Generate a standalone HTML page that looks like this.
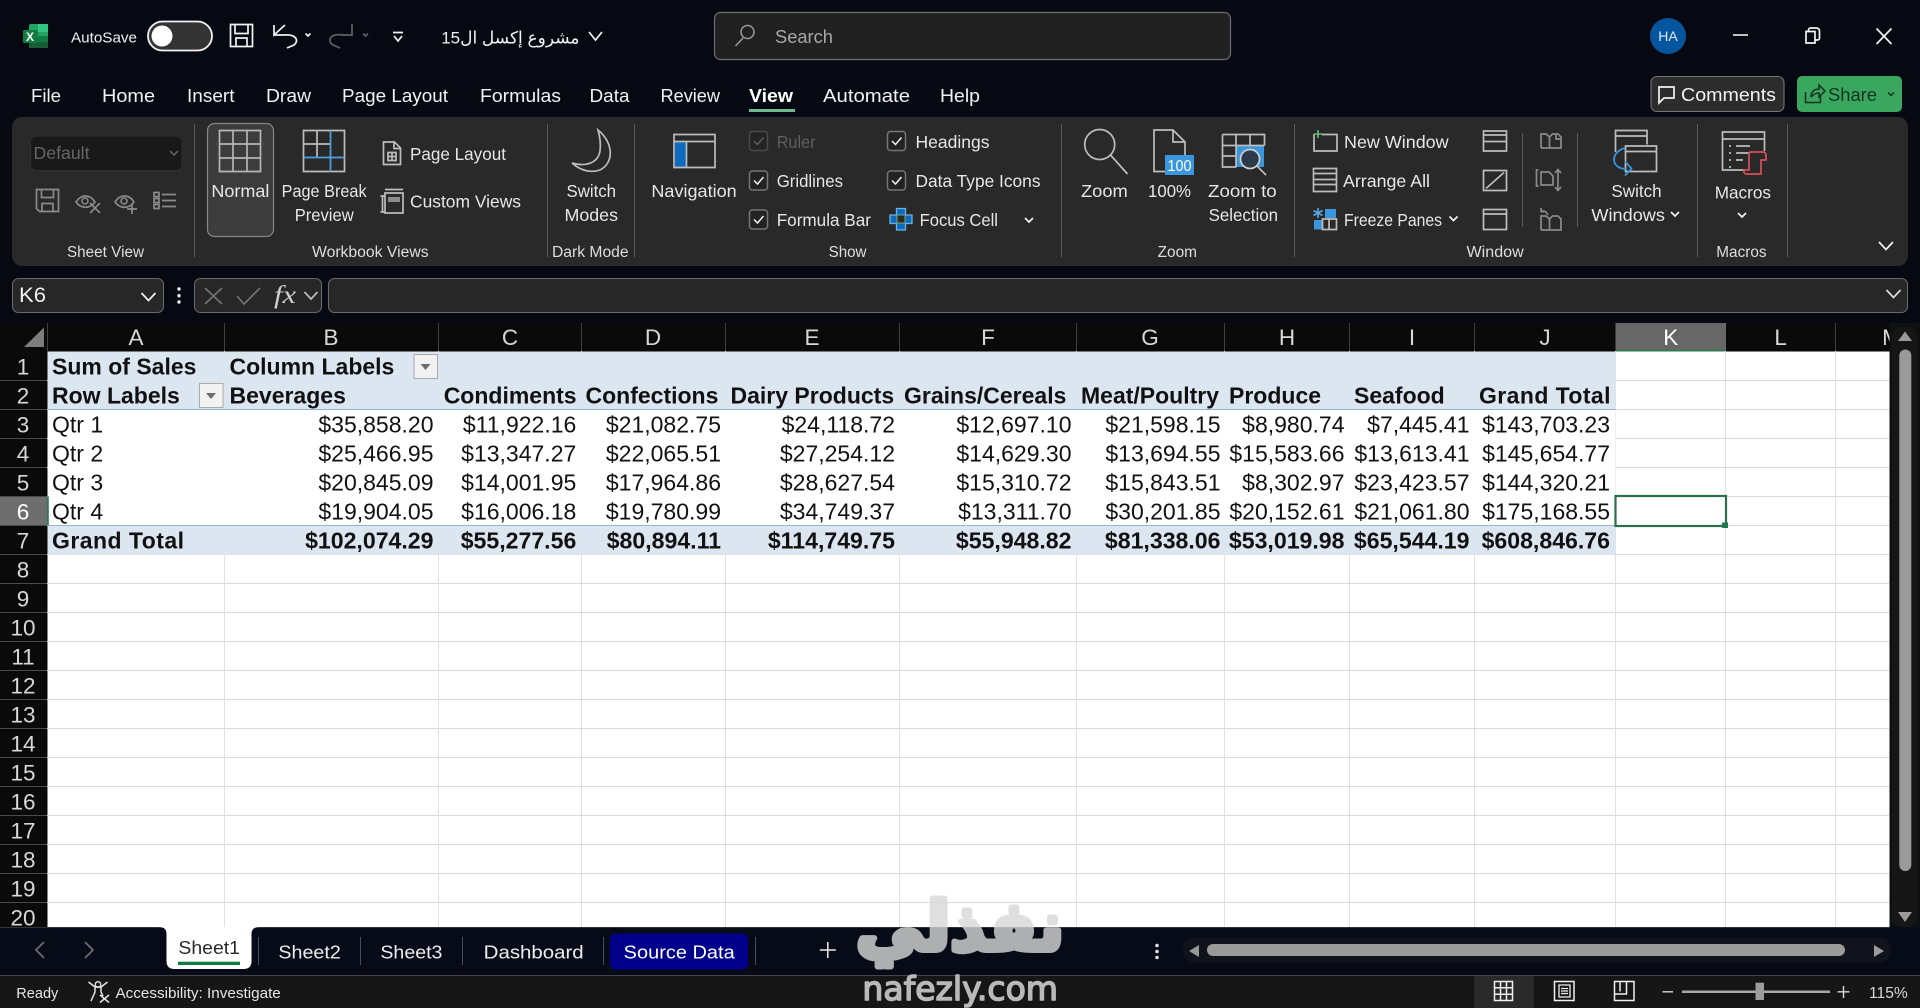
<!DOCTYPE html>
<html><head><meta charset="utf-8"><title>Excel</title>
<style>
html,body{margin:0;padding:0;width:1920px;height:1008px;overflow:hidden;background:#060912}
svg{display:block}
text{font-family:"Liberation Sans","DejaVu Sans",sans-serif;fill:#e6e6e6;font-size:17.5px}
.t{font-size:18.5px;fill:#f2f2f2}
.g{font-size:15.5px;fill:#dedede}
.c{font-size:23px;fill:#111}
.b{font-size:23px;fill:#111;font-weight:bold}
.n{font-size:23px;fill:#111;text-anchor:end}
.nb{font-size:23.1px;fill:#111;font-weight:bold;text-anchor:end}
.h{font-size:22.5px;fill:#d8d8d8;text-anchor:middle}
.s{font-size:18.5px;fill:#ededed}
.i{fill:none;stroke:#bdbdbd;stroke-width:1.7}
.w{fill:none;stroke:#f2f2f2;stroke-width:1.7}
.d{fill:none;stroke:#8a8a8a;stroke-width:1.7}
.sep{stroke:#5a5a5a;stroke-width:1}
</style></head><body>
<svg width="1920" height="1008" viewBox="0 0 1920 1008" xmlns="http://www.w3.org/2000/svg">
<rect width="1920" height="1008" fill="#060912"/>

<!-- Title bar -->
<rect x="29" y="24" width="19" height="24" rx="2" fill="#21a366"/>
<rect x="38" y="24" width="10" height="8" fill="#33c481"/>
<rect x="29" y="36" width="19" height="6" fill="#107c41"/>
<rect x="29" y="42" width="19" height="6" fill="#185c37"/>
<rect x="23" y="30" width="15" height="13" rx="1" fill="#107c41"/>
<text x="26" y="41" style="font-size:12px;font-weight:bold;fill:#fff">X</text>
<text x="71" y="42.5" textLength="66" lengthAdjust="spacingAndGlyphs" style="font-size:15px;fill:#f0f0f0">AutoSave</text>
<rect x="148" y="21.5" width="64" height="29" rx="14.5" fill="#333" stroke="#f2f2f2" stroke-width="1.8"/>
<circle cx="162" cy="36" r="10.5" fill="#fff"/>
<path class="w" d="M230.5 24.5h22v22h-22zM235 24.5v9h13v-9M236 46.5v-8.500h11v8.500"/>
<path class="w" d="M285 25l-11 10v-10M274 35h10c13-1 15 6 10 10l-7 3"/>
<path class="w" stroke-width="1.400" d="M305.500 33.500l2.500 2.500 2.500-2.500"/>
<path class="d" style="stroke:#5f6268" d="M352 24v11h-11M352 35h-8c-15-2-17 6-11 10l7 3"/>
<path class="d" style="stroke:#5f6268" d="M363 33.500l2.500 2.500 2.500-2.500"/>
<path class="w" d="M393 32.500h10M394 36l4 5 4-5"/>
<text x="579.500" y="43.500" direction="rtl" style="font-size:17px;fill:#f2f2f2">مشروع إكسل ال15</text>
<path class="w" d="M589 32l6.500 8 6.500-8"/>
<rect x="714.500" y="12.500" width="516" height="47" rx="6" fill="#212121" stroke="#6e6e6e" stroke-width="1.200"/>
<circle cx="747.500" cy="32" r="6.500" fill="none" stroke="#9a9a9a" stroke-width="1.500"/>
<path d="M743 38l-7.500 8" stroke="#9a9a9a" stroke-width="1.500"/>
<text x="775" y="43" textLength="58" lengthAdjust="spacingAndGlyphs" style="font-size:18px;fill:#a8a8a8">Search</text>
<circle cx="1668" cy="36" r="18" fill="#06569f"/>
<text x="1668" y="41" text-anchor="middle" style="font-size:14px;fill:#dbe8f5">HA</text>
<path d="M1733 35h15" stroke="#f2f2f2" stroke-width="1.600"/>
<path class="w" d="M1806 31.500h9v11.500h-9zM1808.500 31.500v-1.500a2 2 0 0 1 2-2h6a3 3 0 0 1 3 3v7a2 2 0 0 1-2 2h-2"/>
<path class="w" d="M1876.500 28.500l15 15.500M1891.500 28.500l-15 15.500"/>

<!-- Tabs -->
<text class="t" x="31" y="102" textLength="30" lengthAdjust="spacingAndGlyphs">File</text>
<text class="t" x="102" y="102" textLength="53" lengthAdjust="spacingAndGlyphs">Home</text>
<text class="t" x="187" y="102" textLength="47.500" lengthAdjust="spacingAndGlyphs">Insert</text>
<text class="t" x="266" y="102" textLength="45" lengthAdjust="spacingAndGlyphs">Draw</text>
<text class="t" x="342" y="102" textLength="106" lengthAdjust="spacingAndGlyphs">Page Layout</text>
<text class="t" x="480" y="102" textLength="81" lengthAdjust="spacingAndGlyphs">Formulas</text>
<text class="t" x="589.500" y="102" textLength="40" lengthAdjust="spacingAndGlyphs">Data</text>
<text class="t" x="660.500" y="102" textLength="59.500" lengthAdjust="spacingAndGlyphs">Review</text>
<text class="t" x="749" y="102" textLength="44" lengthAdjust="spacingAndGlyphs" style="font-weight:bold;fill:#fff">View</text>
<text class="t" x="823" y="102" textLength="87" lengthAdjust="spacingAndGlyphs">Automate</text>
<text class="t" x="940" y="102" textLength="40" lengthAdjust="spacingAndGlyphs">Help</text>
<rect x="749" y="109" width="46" height="3" fill="#6fb98f"/>
<rect x="1651" y="76.500" width="133" height="35" rx="6" fill="#2c2c2c" stroke="#757575" stroke-width="1.100"/>
<path class="w" d="M1659 87h15v11h-10l-5 5z"/>
<text x="1681" y="101" textLength="95" lengthAdjust="spacingAndGlyphs" style="font-size:18.500px;fill:#f2f2f2">Comments</text>
<rect x="1797" y="76" width="105" height="36" rx="5" fill="#3aa75f"/>
<path d="M1805.500 92v10.500h15v-7M1811 97c0-5 3-8 8-8v-4l6 6-6 6v-4c-4 0-6 2-8 4" fill="none" stroke="#14331f" stroke-width="1.500"/>
<text x="1828" y="101" textLength="49" lengthAdjust="spacingAndGlyphs" style="font-size:18.500px;fill:#14331f">Share</text>
<path d="M1888 92.500l3 3 3-3" fill="none" stroke="#14331f" stroke-width="1.500"/>

<!-- Ribbon -->
<rect x="12" y="117" width="1896" height="149" rx="10" fill="#292929"/>
<g class="sep">
<path d="M194.500 124v133M547.500 124v133M634.500 124v133M1061.500 124v133M1294.500 124v133M1697.500 124v133M1787.500 124v133M1522.500 133v94M1577.500 133v94"/>
</g>
<!-- Sheet view -->
<rect x="30.500" y="136" width="151.500" height="34.500" rx="6" fill="#191919" stroke="#303030"/>
<text x="33.500" y="159" textLength="56" lengthAdjust="spacingAndGlyphs" style="fill:#666;font-size:17.500px">Default</text>
<path d="M170 151l4 4 4-4" fill="none" stroke="#666" stroke-width="1.500"/>
<path class="d" d="M36.500 189.500h22v22h-19l-3-3zM41.500 189.500v8h12v-8M42 211v-7.500h11v7.500"/>
<path class="d" d="M76 202c5-8 14-8 19 0-5 7-14 7-19 0z"/><circle cx="85" cy="201" r="3" fill="none" stroke="#8a8a8a" stroke-width="1.500"/><path class="d" d="M90 203l10 10M100 203l-10 10"/>
<path class="d" d="M115 202c5-8 14-8 19 0-5 7-14 7-19 0z"/><circle cx="124" cy="201" r="3" fill="none" stroke="#8a8a8a" stroke-width="1.500"/><path class="d" d="M132 204v10M127 209h10"/>
<path class="d" d="M154 192.500h5v4h-5zM154 198.500h5v4h-5zM154 204.500h5v4h-5zM162 194.500h14M162 200.500h14M162 206.500h14"/>
<text class="g" x="67" y="257" textLength="77" lengthAdjust="spacingAndGlyphs">Sheet View</text>
<!-- Workbook views -->
<rect x="207.500" y="123.500" width="66" height="113" rx="7" fill="#3c3c3c" stroke="#858585" stroke-width="1.200"/>
<path class="i" style="stroke:#b5b5b5" d="M219.500 130.500h41v41h-41zM233 130.500v41M247 130.500v41M219.500 144h41M219.500 158h41"/>
<text x="211.400" y="197" textLength="58" lengthAdjust="spacingAndGlyphs">Normal</text>
<path class="i" d="M303.500 130.500h41v41h-41zM317 130.500v27M303.500 144h27"/>
<path d="M330.500 130.500v41M303.500 157.500h41" stroke="#4aa0dc" stroke-width="1.800"/>
<text x="281.600" y="197" textLength="85" lengthAdjust="spacingAndGlyphs">Page Break</text>
<text x="294.700" y="221" textLength="59" lengthAdjust="spacingAndGlyphs">Preview</text>
<path class="i" d="M383.500 142h11l6 6v16.500h-17zM394 142v6.500h6.500M388 152.500h8v8h-8zM392 152.500v8M388 156.500h8"/>
<text x="410" y="159.800" textLength="96" lengthAdjust="spacingAndGlyphs">Page Layout</text>
<path class="i" d="M385 193h18v20h-18zM385 189.500h18M380.500 196h4M380.500 212h4M382.500 196v16"/><rect x="388" y="197" width="12" height="5" fill="#8a8a8a"/>
<text x="410" y="207.300" textLength="111" lengthAdjust="spacingAndGlyphs">Custom Views</text>
<text class="g" x="312" y="257" textLength="116.600" lengthAdjust="spacingAndGlyphs">Workbook Views</text>
<!-- Dark mode -->
<path class="i" d="M598 130c16 13 16 33 2 40-9 3-19 1-28-7 14 4 26 0 28-12 1-7 0-14-2-21z"/>
<text x="566.500" y="197" textLength="49.500" lengthAdjust="spacingAndGlyphs">Switch</text>
<text x="564.500" y="221" textLength="53.500" lengthAdjust="spacingAndGlyphs">Modes</text>
<text class="g" x="552" y="257" textLength="76.600" lengthAdjust="spacingAndGlyphs">Dark Mode</text>
<!-- Navigation -->
<rect x="675" y="142" width="11" height="25" fill="#0f6cbd"/>
<path class="i" d="M674 134.500h41v33h-41zM674 141.500h41M686.500 141.500v26"/>
<text x="651.400" y="197" textLength="85.300" lengthAdjust="spacingAndGlyphs">Navigation</text>
<!-- Show checkboxes -->
<rect x="749.500" y="131.500" width="18" height="19" rx="3" fill="#232323" stroke="#4a4a4a" stroke-width="1.500"/>
<path d="M754 141l3.500 3.500 6-7" fill="none" stroke="#5e5e5e" stroke-width="1.500"/>
<text x="776.700" y="148" textLength="38.800" lengthAdjust="spacingAndGlyphs" style="fill:#5f5f5f">Ruler</text>
<rect x="749.500" y="171" width="18" height="19" rx="3" fill="#232323" stroke="#757575" stroke-width="1.500"/>
<path d="M754 180.500l3.500 3.500 6-7" fill="none" stroke="#f0f0f0" stroke-width="1.500"/>
<text x="776.700" y="187" textLength="66.300" lengthAdjust="spacingAndGlyphs">Gridlines</text>
<rect x="749.500" y="210" width="18" height="19" rx="3" fill="#232323" stroke="#757575" stroke-width="1.500"/>
<path d="M754 219.500l3.500 3.500 6-7" fill="none" stroke="#f0f0f0" stroke-width="1.500"/>
<text x="776.700" y="226" textLength="94.300" lengthAdjust="spacingAndGlyphs">Formula Bar</text>
<rect x="887.500" y="131.500" width="18" height="19" rx="3" fill="#232323" stroke="#757575" stroke-width="1.500"/>
<path d="M892 141l3.500 3.500 6-7" fill="none" stroke="#f0f0f0" stroke-width="1.500"/>
<text x="915.500" y="148" textLength="74" lengthAdjust="spacingAndGlyphs">Headings</text>
<rect x="887.500" y="171" width="18" height="19" rx="3" fill="#232323" stroke="#757575" stroke-width="1.500"/>
<path d="M892 180.500l3.500 3.500 6-7" fill="none" stroke="#f0f0f0" stroke-width="1.500"/>
<text x="915.500" y="187" textLength="125" lengthAdjust="spacingAndGlyphs">Data Type Icons</text>
<path d="M896.500 208.500h9v6.500h6.500v8.500h-6.500v6.500h-9v-6.500h-6.500v-8.500h6.500z" fill="#0f6cbd" stroke="#6ab2e6" stroke-width="1.300"/>
<rect x="897" y="215" width="8" height="8" fill="#262c28" stroke="#7f9f7f"/>
<text x="919.600" y="226" textLength="78.400" lengthAdjust="spacingAndGlyphs">Focus Cell</text>
<path class="w" d="M1025 218l4 4 4-4"/>
<text class="g" x="828.600" y="257" textLength="37.900" lengthAdjust="spacingAndGlyphs">Show</text>
<!-- Zoom -->
<circle cx="1099.700" cy="144.500" r="15" class="i"/>
<path class="i" d="M1110.500 155l17 19"/>
<text x="1081" y="197" textLength="46.800" lengthAdjust="spacingAndGlyphs">Zoom</text>
<path class="i" d="M1185 155v-13l-12-12h-19v41.500h11M1173 130v12h12"/>
<rect x="1165" y="155" width="29" height="20" fill="#3a96dd"/>
<text x="1167.500" y="171" textLength="24" lengthAdjust="spacingAndGlyphs" style="font-size:16px;fill:#fff">100</text>
<text x="1148" y="197" textLength="43" lengthAdjust="spacingAndGlyphs">100%</text>
<rect x="1236" y="145" width="28" height="22" fill="#3a96dd"/>
<path class="i" d="M1222.500 134.500h42v11M1222.500 134.500v32.500h14M1222.500 145.500h42M1222.500 156h14M1236 134.500v32.500M1250 134.500v11"/>
<circle cx="1250" cy="159" r="9.500" fill="#2b3b47" stroke="#d0d0d0" stroke-width="1.700"/>
<path class="i" d="M1257 166l9 9"/>
<text x="1208" y="197" textLength="68.700" lengthAdjust="spacingAndGlyphs">Zoom to</text>
<text x="1208.600" y="221" textLength="69.400" lengthAdjust="spacingAndGlyphs">Selection</text>
<text class="g" x="1157.600" y="257" textLength="39.400" lengthAdjust="spacingAndGlyphs">Zoom</text>
<!-- Window -->
<path class="i" d="M1322 134.500h15v16.500h-23v-17"/><path d="M1318 130v8M1314 134h8" stroke="#5bbd72" stroke-width="1.600"/>
<text x="1344" y="148" textLength="104.600" lengthAdjust="spacingAndGlyphs">New Window</text>
<path class="i" d="M1313.500 168.500h23v23h-23zM1313.500 173.500h23M1313.500 179.500h23M1313.500 184.500h23"/>
<text x="1343" y="187" textLength="87" lengthAdjust="spacingAndGlyphs">Arrange All</text>
<rect x="1314" y="220" width="8" height="9.500" fill="#3a96dd"/><rect x="1325" y="209" width="11" height="9" fill="#3a96dd"/>
<path class="i" d="M1322.500 219h14v10.500h-14zM1329 219v10.500"/>
<path d="M1318 208v10M1313.500 210.500l9 5M1322.500 210.500l-9 5" stroke="#5aa9e6" stroke-width="1.600"/>
<text x="1344" y="226" textLength="98" lengthAdjust="spacingAndGlyphs">Freeze Panes</text>
<path class="w" d="M1449.500 216.500l4 4 4-4"/>
<path class="i" d="M1483.500 131h23v20h-23zM1483.500 135h23M1483.500 141.500h23"/>
<path class="i" d="M1483.500 170.500h23v20h-23zM1486 188.500l18-16"/>
<path class="i" d="M1483.500 209.500h23v20h-23zM1483.500 214h23"/>
<path class="d" d="M1541 148v-14h5l3.500 3 3-3h5.500l3 3v11h-20M1549.500 137v11M1556 134v5h5"/>
<path class="d" d="M1538.500 170h-2v16h2M1541 172h8l4 4v9h-12zM1558 170v20M1555 173l3-3.500 3 3.500M1555 187l3 3.500 3-3.500"/>
<path class="d" d="M1541 230v-14h5l3.500 3 3-3h5.500l3 3v11h-20M1549.500 219v11M1548 215c-2-4-5-5-7-3M1541 212l0-4M1541 212l3.500-1"/>
<text class="g" x="1466.500" y="257" textLength="57.200" lengthAdjust="spacingAndGlyphs">Window</text>
<!-- Switch windows -->
<path class="i" d="M1615.500 152v-21.500h31.500v14M1615.500 136h31.500M1625.500 146h31v25.500h-31zM1625.500 151.500h31"/>
<path d="M1625 148c-15 4-15 21 2 21M1625 161.500l6.500 7-6.500 7" fill="none" stroke="#3a96dd" stroke-width="1.800"/>
<text x="1611.400" y="197" textLength="50.200" lengthAdjust="spacingAndGlyphs">Switch</text>
<text x="1591.400" y="221" textLength="73.600" lengthAdjust="spacingAndGlyphs">Windows</text>
<path class="w" d="M1671 212l4 4 4-4"/>
<!-- Macros -->
<path class="i" d="M1745 170h-22.500v-38h42v19M1722.500 139h42M1729 146h2M1736 146h14M1729 153h2M1736 153h18M1729 160h2M1736 160h7M1729 167h2"/>
<path d="M1750 152h13a3 3 0 0 1 3 3v5h-5v14h-15a3 3 0 0 1-2-4h5v-15a3 3 0 0 1 1-3z" fill="#292929" stroke="#d9505a" stroke-width="1.700"/>
<text x="1714.700" y="198.700" textLength="56.300" lengthAdjust="spacingAndGlyphs">Macros</text>
<path class="w" d="M1738 213l4 4 4-4"/>
<text class="g" x="1716.300" y="257" textLength="50.200" lengthAdjust="spacingAndGlyphs">Macros</text>
<path class="w" d="M1879 242l7 7.500 7-7.500"/>

<!-- Formula bar -->
<rect x="12.500" y="278.500" width="151" height="34" rx="6" fill="#272727" stroke="#686868" stroke-width="1.100"/>
<text x="19" y="302" textLength="27" lengthAdjust="spacingAndGlyphs" style="font-size:21px;fill:#f0f0f0">K6</text>
<path class="w" d="M141.500 293l7 7.500 7-7.500"/>
<circle cx="179" cy="289" r="1.700" fill="#eee"/><circle cx="179" cy="295.700" r="1.700" fill="#eee"/><circle cx="179" cy="302" r="1.700" fill="#eee"/>
<rect x="194.500" y="278.500" width="127" height="34" rx="6" fill="#272727" stroke="#686868" stroke-width="1.100"/>
<path d="M205 288l17 16M222 288l-17 16" stroke="#737373" stroke-width="1.700"/>
<path d="M237 296l7 8 16-16" fill="none" stroke="#737373" stroke-width="1.700"/>
<text x="274" y="303" textLength="22" lengthAdjust="spacingAndGlyphs" style="font-family:'Liberation Serif',serif;font-style:italic;font-size:25px;fill:#cfcfcf">fx</text>
<path class="i" d="M304.500 292l6.500 7 6.500-7"/>
<rect x="328.500" y="278.500" width="1579" height="34" rx="6" fill="#272727" stroke="#686868" stroke-width="1.100"/>
<path class="i" style="stroke:#ddd" d="M1886.500 290l7 7.500 7-7.500"/>

<!-- Column / row headers -->
<rect x="0" y="323" width="1889.500" height="28.500" fill="#0a0a0a"/>
<rect x="0" y="351" width="47.500" height="576" fill="#0a0a0a"/>
<rect x="1889.500" y="323" width="30.500" height="604" fill="#0f1012"/>
<path d="M44 327.500v19.500h-20z" fill="#7d7d7d"/>
<rect x="1615.500" y="323" width="110.500" height="28" fill="#676767"/>
<rect x="1615.500" y="349.800" width="110.500" height="2" fill="#2f7a54"/>
<rect x="0" y="496.300" width="47.500" height="29" fill="#6e6e6e"/>
<path d="M47.500 323v28M224.500 323v28M438.500 323v28M581.500 323v28M725.500 323v28M899.500 323v28M1076.500 323v28M1224.500 323v28M1349.500 323v28M1474.500 323v28M1835.500 323v28" stroke="#404040"/>
<text class="h" x="136" y="345">A</text><text class="h" x="331" y="345">B</text><text class="h" x="510" y="345">C</text><text class="h" x="653" y="345">D</text><text class="h" x="812" y="345">E</text><text class="h" x="988" y="345">F</text><text class="h" x="1150" y="345">G</text><text class="h" x="1287" y="345">H</text><text class="h" x="1412" y="345">I</text><text class="h" x="1545" y="345">J</text><text class="h" x="1670.700" y="345" style="fill:#fff">K</text><text class="h" x="1780.600" y="345">L</text>
<svg x="1836" y="323" width="53.500" height="28"><text class="h" x="55.500" y="22">M</text></svg>
<path d="M0 380.500h47M0 409.500h47M0 438.500h47M0 467.500h47M0 496.500h47M0 525.500h47M0 554.500h47M0 583.500h47M0 612.500h47M0 641.500h47M0 670.500h47M0 699.500h47M0 728.500h47M0 757.500h47M0 786.500h47M0 815.500h47M0 844.500h47M0 873.500h47M0 902.500h47" stroke="#4a4a4a"/>
<g transform="translate(0,-.8)">
<text class="h" x="23" y="375.300">1</text><text class="h" x="23" y="404.300">2</text><text class="h" x="23" y="433.300">3</text><text class="h" x="23" y="462.300">4</text><text class="h" x="23" y="491.300">5</text><text class="h" x="23" y="520.300" style="fill:#fff">6</text><text class="h" x="23" y="549.300">7</text><text class="h" x="23" y="578.300">8</text><text class="h" x="23" y="607.300">9</text><text class="h" x="23" y="636.300">10</text><text class="h" x="23" y="665.300">11</text><text class="h" x="23" y="694.300">12</text><text class="h" x="23" y="723.300">13</text><text class="h" x="23" y="752.300">14</text><text class="h" x="23" y="781.300">15</text><text class="h" x="23" y="810.300">16</text><text class="h" x="23" y="839.300">17</text><text class="h" x="23" y="868.300">18</text><text class="h" x="23" y="897.300">19</text><text class="h" x="23" y="926.300">20</text>
</g>

<!-- Grid -->
<rect x="47.500" y="351.500" width="1842" height="575.500" fill="#fff"/>
<path d="M224.500 351v576M438.500 351v576M581.500 351v576M725.500 351v576M899.500 351v576M1076.500 351v576M1224.500 351v576M1349.500 351v576M1474.500 351v576M1615.500 351v576M1725.500 351v576M1835.500 351v576" stroke="#e0e0e0"/>
<path d="M47 380.500h1842M47 409.500h1842M47 438.500h1842M47 467.500h1842M47 496.500h1842M47 525.500h1842M47 554.500h1842M47 583.500h1842M47 612.500h1842M47 641.500h1842M47 670.500h1842M47 699.500h1842M47 728.500h1842M47 757.500h1842M47 786.500h1842M47 815.500h1842M47 844.500h1842M47 873.500h1842M47 902.500h1842" stroke="#dcdcdc"/>
<rect x="47.500" y="351.500" width="1568" height="58" fill="#dce6f1"/>
<rect x="47.500" y="409.500" width="1568" height="116" fill="#fff"/>
<rect x="47.500" y="525.500" width="1568" height="29" fill="#dce6f1"/>
<path d="M47.500 409.500h1568M47.500 525.500h1568" stroke="#95b3d7"/>
<rect x="47" y="496.300" width="1.800" height="29" fill="#2f7a54"/>

<rect x="414" y="354.500" width="23.500" height="24" fill="#f2f2f2" stroke="#ababab"/><path d="M420.500 364h10l-5 6z" fill="#6e6e6e"/>
<rect x="199.500" y="383.500" width="23.500" height="24" fill="#f2f2f2" stroke="#ababab"/><path d="M206 393h10l-5 6z" fill="#6e6e6e"/>

<g transform="translate(0,-.8)">
<text class="b" x="52" y="375.300">Sum of Sales</text>
<text class="b" x="229.500" y="375.300">Column Labels</text>
<text class="b" x="52" y="404.300">Row Labels</text>
<text class="b" x="229.500" y="404.300">Beverages</text>
<text class="b" x="443.700" y="404.300">Condiments</text>
<text class="b" x="585.500" y="404.300">Confections</text>
<text class="b" x="730.500" y="404.300">Dairy Products</text>
<text class="b" x="904" y="404.300">Grains/Cereals</text>
<text class="b" x="1081" y="404.300">Meat/Poultry</text>
<text class="b" x="1229" y="404.300">Produce</text>
<text class="b" x="1354" y="404.300">Seafood</text>
<text class="b" x="1479" y="404.300" textLength="131.500" lengthAdjust="spacing">Grand Total</text>

<text class="c" x="52" y="433.300">Qtr 1</text><text class="n" x="433.500" y="433.300">$35,858.20</text><text class="n" x="576.300" y="433.300">$11,922.16</text><text class="n" x="721" y="433.300">$21,082.75</text><text class="n" x="895" y="433.300">$24,118.72</text><text class="n" x="1071.500" y="433.300">$12,697.10</text><text class="n" x="1220.500" y="433.300">$21,598.15</text><text class="n" x="1344.500" y="433.300">$8,980.74</text><text class="n" x="1469.500" y="433.300">$7,445.41</text><text class="n" x="1610" y="433.300">$143,703.23</text>
<text class="c" x="52" y="462.300">Qtr 2</text><text class="n" x="433.500" y="462.300">$25,466.95</text><text class="n" x="576.300" y="462.300">$13,347.27</text><text class="n" x="721" y="462.300">$22,065.51</text><text class="n" x="895" y="462.300">$27,254.12</text><text class="n" x="1071.500" y="462.300">$14,629.30</text><text class="n" x="1220.500" y="462.300">$13,694.55</text><text class="n" x="1344.500" y="462.300">$15,583.66</text><text class="n" x="1469.500" y="462.300">$13,613.41</text><text class="n" x="1610" y="462.300">$145,654.77</text>
<text class="c" x="52" y="491.300">Qtr 3</text><text class="n" x="433.500" y="491.300">$20,845.09</text><text class="n" x="576.300" y="491.300">$14,001.95</text><text class="n" x="721" y="491.300">$17,964.86</text><text class="n" x="895" y="491.300">$28,627.54</text><text class="n" x="1071.500" y="491.300">$15,310.72</text><text class="n" x="1220.500" y="491.300">$15,843.51</text><text class="n" x="1344.500" y="491.300">$8,302.97</text><text class="n" x="1469.500" y="491.300">$23,423.57</text><text class="n" x="1610" y="491.300">$144,320.21</text>
<text class="c" x="52" y="520.300">Qtr 4</text><text class="n" x="433.500" y="520.300">$19,904.05</text><text class="n" x="576.300" y="520.300">$16,006.18</text><text class="n" x="721" y="520.300">$19,780.99</text><text class="n" x="895" y="520.300">$34,749.37</text><text class="n" x="1071.500" y="520.300">$13,311.70</text><text class="n" x="1220.500" y="520.300">$30,201.85</text><text class="n" x="1344.500" y="520.300">$20,152.61</text><text class="n" x="1469.500" y="520.300">$21,061.80</text><text class="n" x="1610" y="520.300">$175,168.55</text>
<text class="b" x="52" y="549.300" textLength="132" lengthAdjust="spacing">Grand Total</text><text class="nb" x="433.500" y="549.300">$102,074.29</text><text class="nb" x="576.300" y="549.300">$55,277.56</text><text class="nb" x="721" y="549.300">$80,894.11</text><text class="nb" x="895" y="549.300">$114,749.75</text><text class="nb" x="1071.500" y="549.300">$55,948.82</text><text class="nb" x="1220.500" y="549.300">$81,338.06</text><text class="nb" x="1344.500" y="549.300">$53,019.98</text><text class="nb" x="1469.500" y="549.300">$65,544.19</text><text class="nb" x="1610" y="549.300">$608,846.76</text>
</g>

<rect x="1615.500" y="496" width="110.500" height="30" fill="none" stroke="#2b6e4b" stroke-width="2.200"/>
<rect x="1722" y="522.500" width="6" height="5.500" fill="#1f7a4a"/>

<!-- Vertical scroll -->
<rect x="1892" y="327" width="25" height="600" rx="10" fill="#161616"/>
<path d="M1905 331.500l7 9.500h-14z" fill="#9a9a9a"/>
<rect x="1899.300" y="349.500" width="12" height="521.500" rx="6" fill="#9a9a9a"/>
<path d="M1898 912h14l-7 10z" fill="#9a9a9a"/>

<!-- Sheet tabs -->
<rect x="0" y="927" width="1920" height="48" fill="#070b18"/>
<path d="M0 927.500H1889.500" stroke="#2e323a"/>
<path d="M159 927q7.500 0 7.500 7v27q0 8 8 8h69q8 0 8-8v-27q0-7 7.500-7z" fill="#fff"/>
<text x="178.400" y="954" textLength="61.600" lengthAdjust="spacingAndGlyphs" style="font-size:18.500px;fill:#2a2a2a">Sheet1</text>
<rect x="178" y="961.700" width="62" height="3.300" fill="#107c41"/>
<path class="i" style="stroke:#6f6f6f" d="M44 942l-8 8 8 8M85 942l8 8-8 8"/>
<path d="M258.500 937v28M360.500 937v28M462.500 937v28M603.500 937v28M755.500 937v28" stroke="#4a4e58"/>
<text class="s" x="278.400" y="958.500" textLength="62.400" lengthAdjust="spacingAndGlyphs">Sheet2</text>
<text class="s" x="380.400" y="958.500" textLength="62" lengthAdjust="spacingAndGlyphs">Sheet3</text>
<text class="s" x="483.700" y="958.500" textLength="100" lengthAdjust="spacingAndGlyphs">Dashboard</text>
<rect x="610" y="933.500" width="138" height="36" rx="6" fill="#00008b"/>
<text class="s" x="623.700" y="958.500" textLength="111" lengthAdjust="spacingAndGlyphs" style="fill:#fff">Source Data</text>
<path d="M827.800 942v16M819.800 950h16" stroke="#ededed" stroke-width="1.500"/>
<circle cx="1157" cy="945.500" r="1.800" fill="#ddd"/><circle cx="1157" cy="951.500" r="1.800" fill="#ddd"/><circle cx="1157" cy="957.500" r="1.800" fill="#ddd"/>
<rect x="1183" y="937" width="708" height="26" rx="12" fill="#10131b"/>
<path d="M1199 945v12l-10-6z" fill="#9a9a9a"/>
<rect x="1207" y="944" width="638" height="12" rx="6" fill="#9a9a9a"/>
<path d="M1874 945l10 6-10 6z" fill="#9a9a9a"/>

<!-- Status bar -->
<rect x="0" y="975" width="1920" height="33" fill="#161616"/>
<path d="M0 975.500h1920" stroke="#44464c"/>
<text x="16.300" y="998" textLength="42" lengthAdjust="spacingAndGlyphs" style="font-size:15px;fill:#e6e6e6">Ready</text>
<circle cx="98" cy="984.500" r="2.800" fill="none" stroke="#e6e6e6" stroke-width="1.300"/>
<path d="M88.500 982l6.500 5h6l6.500-5M95 987v5l-4 9M101 987v5l2 4M100 995l9 7.500M109 995l-9 7.500" fill="none" stroke="#e6e6e6" stroke-width="1.500"/>
<text x="115.500" y="998" textLength="165.300" lengthAdjust="spacingAndGlyphs" style="font-size:15px;fill:#e6e6e6">Accessibility: Investigate</text>
<rect x="1474" y="976" width="60" height="32" fill="#2a2a2a"/>
<path d="M1494.500 981.500h18v19h-18zM1500.500 981.500v19M1506.500 981.500v19M1494.500 987.800h18M1494.500 994.200h18" fill="none" stroke="#f0f0f0" stroke-width="1.500"/>
<path d="M1554.500 981.500h19.500v19h-19.500z" fill="none" stroke="#f0f0f0" stroke-width="1.500"/>
<path d="M1559 985h11v12h-11zM1561 988.500h7M1561 991h7M1561 993.500h7" fill="none" stroke="#f0f0f0" stroke-width="1.300"/>
<path d="M1614.500 981.500h19.500v19h-19.500zM1614.500 994h12v-12.500M1620 981.500v10" fill="none" stroke="#f0f0f0" stroke-width="1.500"/>
<path d="M1662.500 991.800h10.500M1837.600 991.800h11.800M1843.500 986v12" stroke="#dcdcdc" stroke-width="1.400"/>
<rect x="1682" y="990.500" width="148" height="2.500" fill="#a8a8a8"/>
<rect x="1755.500" y="982.700" width="8.500" height="17.300" fill="#9c9c9c"/>
<text x="1869" y="998" textLength="38.800" lengthAdjust="spacingAndGlyphs" style="font-size:15.500px;fill:#d8d8d8">115%</text>

<!-- Watermark -->
<g opacity=".8">
<text x="856" y="950" textLength="208" lengthAdjust="spacingAndGlyphs" style="font-family:'DejaVu Sans',sans-serif;font-weight:bold;font-size:68px;fill:#d8d8d8;stroke:#d8d8d8;stroke-width:6px;stroke-linejoin:round">نفذلي</text>
</g>
<text x="862.400" y="1000" textLength="195.600" lengthAdjust="spacingAndGlyphs" style="font-family:'DejaVu Sans',sans-serif;font-size:33px;fill:#b9b9b9;stroke:#b9b9b9;stroke-width:1.500px;stroke-linejoin:round">nafezly.com</text>
</svg>
</body></html>
